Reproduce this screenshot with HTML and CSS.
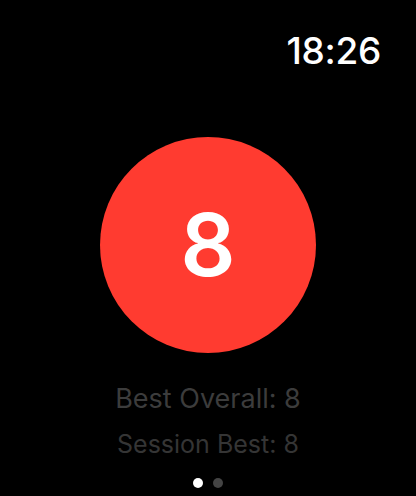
FILE: index.html
```html
<!DOCTYPE html>
<html lang="en">
<head>
    <meta charset="UTF-8">
    <meta name="viewport" content="width=device-width, initial-scale=1.0">
    <title>Score</title>
    <link rel="stylesheet" href="styles.css">
</head>
<body>
    <div class="watch">
        <div class="status-bar">
            <span class="clock">18:26</span>
        </div>

        <div class="score-circle">
            <span class="score">8</span>
        </div>

        <div class="stats">
            <p class="best-overall">Best Overall: 8</p>
            <p class="session-best">Session Best: 8</p>
        </div>

        <!-- page indicator -->
        <div class="pager">
            <span class="dot active"></span>
            <span class="dot"></span>
        </div>
    </div>
</body>
</html>
```

FILE: styles.css
```css
html, body {
    margin: 0;
    padding: 0;
    background: #000;
}
body {
    font-family: Inter, "Noto Sans", sans-serif;
    color: #fff;
}
.watch {
    width: 416px;
    height: 496px;
    display: flex;
    flex-direction: column;
    align-items: center;
    overflow: hidden;
}
.status-bar {
    align-self: stretch;
    display: flex;
    justify-content: flex-end;
    padding: 28px 35px 0 0;
    height: 48px;
}
.clock {
    font-size: 37px;
    font-weight: 500;
    letter-spacing: -0.3px;
    line-height: 46px;
}
.score-circle {
    margin-top: 61px;
    width: 216px;
    height: 216px;
    border-radius: 50%;
    background: #ff3b30;
    display: flex;
    align-items: center;
    justify-content: center;
}
.score {
    font-size: 86px;
    font-weight: 600;
    line-height: 1;
}
.stats {
    margin-top: 28px;
    text-align: center;
}
.stats p {
    margin: 0;
}
.best-overall {
    font-size: 27px;
    color: #3c3c3c;
    line-height: 36px;
}
.session-best {
    font-size: 25px;
    color: #353535;
    line-height: 34px;
    margin-top: 10px !important;
}
.pager {
    display: flex;
    gap: 10px;
    margin-top: 17px;
}
.dot {
    width: 10px;
    height: 10px;
    border-radius: 50%;
    background: #444;
}
.dot.active {
    background: #fff;
}
```
